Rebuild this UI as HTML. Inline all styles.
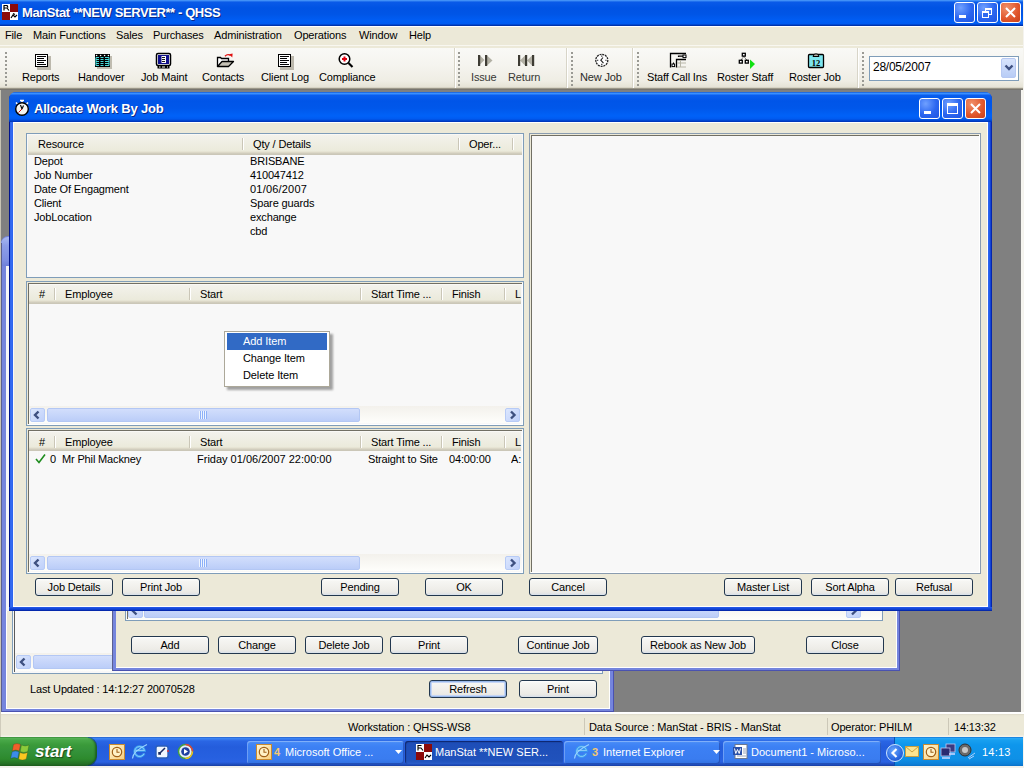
<!DOCTYPE html>
<html><head><meta charset="utf-8">
<style>
*{box-sizing:border-box}
html,body{margin:0;padding:0}
body{width:1024px;height:768px;overflow:hidden;position:relative;background:#808080;font-family:"Liberation Sans",sans-serif;font-size:11px;color:#000}
.a{position:absolute}
.t{position:absolute;white-space:nowrap;font-size:11px;line-height:13px;letter-spacing:-0.15px}
.btn{position:absolute;height:18px;width:78px;border:1px solid #22374E;border-radius:3px;background:linear-gradient(#FFFFFF 0,#F6F6F3 2px,#F1F0EC 50%,#ECEBE6 80%,#E2E4E6 92%,#D6E0EC 100%);text-align:center;line-height:17px;font-size:11px;white-space:nowrap;letter-spacing:-0.15px}
.beige{background:#ECE9D8}
.hdr{position:absolute;height:20px;background:linear-gradient(#FFFFFF 0,#F3F2EC 1px,#EBEADB 16px,#E2DECD 17px,#D6D2C2 18px,#CBC7B8 19px)}
.sep{position:absolute;width:1px;height:12px;background:#CAC6B7;box-shadow:1px 0 0 #FFFFFF}
.sbtn{position:absolute;width:15px;height:14px;border-radius:2px;background:linear-gradient(135deg,#DCE7FE,#BFD0FA);border:1px solid #B7CBF6}
.thumb{position:absolute;height:14px;border-radius:2px;background:linear-gradient(#D2DEFC,#BBCDF8);border:1px solid #B3C7F4}
.track{position:absolute;height:17px;background:linear-gradient(#F3F1EC,#FEFEFB)}
.grip{position:absolute;width:2px;background-image:linear-gradient(#9A9A94 0,#9A9A94 2px,transparent 2px);background-size:2px 4px}
.tbsep{position:absolute;width:2px;top:48px;height:40px;background:linear-gradient(90deg,#D8D5C8 0,#D8D5C8 1px,#FFFFFF 1px)}
</style></head>
<body>

<!-- ===== Main window title bar ===== -->
<div class="a" style="left:0;top:0;width:1023px;height:26px;background:linear-gradient(#4D9BFA 0,#3585F4 1px,#0A5AE8 2px,#0053E4 8px,#0055E6 14px,#005EF5 21px,#005BF0 24px,#0038B8 25px,#0030A0 26px)"></div>
<div class="a" style="left:1023px;top:0;width:1px;height:768px;background:#F4F3EE"></div>
<svg class="a" style="left:2px;top:4px" width="16" height="16" viewBox="0 0 16 16">
 <rect x="0" y="0" width="16" height="16" fill="#fff"/>
 <rect x="8" y="0" width="8" height="8" fill="#8B0A0A"/>
 <rect x="0" y="8" width="8" height="8" fill="#8B0A0A"/>
 <path d="M1.5 1.5h4M2 1.5v5M2 4h3l2 2.5M5 1.5l1 2" stroke="#000" stroke-width="1.2" fill="none"/>
 <path d="M9 14l2-3 2 2 2-2M11 9.5l2 1" stroke="#000" stroke-width="1.2" fill="none"/>
</svg>
<div class="t" style="left:22px;top:5px;font-size:13px;line-height:16px;font-weight:bold;color:#fff;letter-spacing:-0.4px;text-shadow:1px 1px 0 #0A2A8A">ManStat **NEW SERVER** - QHSS</div>
<!-- title buttons -->
<div class="a" style="left:954px;top:2px;width:21px;height:21px;border:1px solid #fff;border-radius:3px;background:radial-gradient(circle at 30% 25%,#6FA0FF,#2B66F0 55%,#1E55E0)">
 <div class="a" style="left:4px;top:12px;width:7px;height:3px;background:#fff"></div></div>
<div class="a" style="left:977px;top:2px;width:21px;height:21px;border:1px solid #fff;border-radius:3px;background:radial-gradient(circle at 30% 25%,#6FA0FF,#2B66F0 55%,#1E55E0)">
 <div class="a" style="left:7px;top:5px;width:7px;height:7px;border:1px solid #fff;border-top-width:2px"></div>
 <div class="a" style="left:4px;top:8px;width:7px;height:7px;border:1px solid #fff;border-top-width:2px;background:#2F6AF0"></div></div>
<div class="a" style="left:1000px;top:2px;width:21px;height:21px;border:1px solid #fff;border-radius:3px;background:radial-gradient(circle at 30% 25%,#F0906A,#E0552A 60%,#C8401C)">
 <svg class="a" style="left:4px;top:4px" width="11" height="11"><path d="M1 1L10 10M10 1L1 10" stroke="#fff" stroke-width="2"/></svg></div>

<!-- ===== Menu bar ===== -->
<div class="a beige" style="left:0;top:26px;width:1023px;height:20px;border-top:1px solid #fff"></div>
<div class="t" style="left:5px;top:29px">File</div>
<div class="t" style="left:33px;top:29px">Main Functions</div>
<div class="t" style="left:116px;top:29px">Sales</div>
<div class="t" style="left:153px;top:29px">Purchases</div>
<div class="t" style="left:214px;top:29px">Administration</div>
<div class="t" style="left:294px;top:29px">Operations</div>
<div class="t" style="left:359px;top:29px">Window</div>
<div class="t" style="left:409px;top:29px">Help</div>

<!-- ===== Toolbar ===== -->
<div class="a" style="left:0;top:45px;width:1023px;height:45px;background:linear-gradient(#F8F7F0 0,#F8F7F0 1px,#ECE9D8 1px,#ECE9D8 3px,#F9F9F6 3px,#F5F4EF 20px,#EFEDE4 36px,#E6E3D6 42px,#C8C4B4 43px,#6E6A5E 44px,#808080 45px)"></div>

<div class="grip" style="left:5px;top:52px;height:35px"></div>
<div class="tbsep" style="left:454px"></div>
<div class="grip" style="left:458px;top:52px;height:35px"></div>
<div class="tbsep" style="left:566px"></div>
<div class="grip" style="left:571px;top:52px;height:35px"></div>
<div class="tbsep" style="left:632px"></div>
<div class="grip" style="left:637px;top:52px;height:35px"></div>
<div class="tbsep" style="left:857px"></div>
<div class="grip" style="left:862px;top:52px;height:35px"></div>

<!-- Reports icon -->
<svg class="a" style="left:34px;top:53px" width="18" height="18" viewBox="0 0 18 18" shape-rendering="crispEdges">
 <rect x="3" y="3" width="14" height="14" fill="#BCB8AC"/>
 <rect x="1" y="1" width="13" height="13" fill="#000"/>
 <rect x="2" y="2" width="11" height="11" fill="#fff"/>
 <rect x="3" y="3" width="9" height="1" fill="#000"/><rect x="3" y="5" width="7" height="1" fill="#000"/><rect x="3" y="7" width="9" height="1" fill="#000"/><rect x="3" y="9" width="7" height="1" fill="#000"/><rect x="3" y="11" width="9" height="1" fill="#000"/>
</svg>
<div class="t" style="left:22px;top:71px">Reports</div>

<!-- Handover icon -->
<svg class="a" style="left:94px;top:53px" width="18" height="18" viewBox="0 0 18 18">
 <rect x="3" y="3" width="15" height="13" fill="#C0BCB0"/>
 <rect x="1" y="1" width="15" height="13" fill="#000"/>
 <g fill="#fff"><circle cx="2.6" cy="2.5" r="0.8"/><circle cx="6.6" cy="2.5" r="0.8"/><circle cx="10.6" cy="2.5" r="0.8"/><circle cx="14.4" cy="2.5" r="0.8"/></g>
 <g stroke="#48D8D8" stroke-width="1.1">
  <path d="M2 4.5h3M2 6.5h3M2 8.5h3M2 10.5h3M2 12.5h3M2 4.5v8"/>
  <path d="M6.5 4.5h3M6.5 6.5h3M6.5 8.5h3M6.5 10.5h3M6.5 12.5h3"/>
  <path d="M11 4.5h4M11 6.5h4M11 8.5h4M11 10.5h4M11 12.5h4M15 4.5v8"/>
 </g>
</svg>
<div class="t" style="left:78px;top:71px">Handover</div>

<!-- Job Maint icon -->
<svg class="a" style="left:155px;top:52px" width="18" height="18" viewBox="0 0 18 18">
 <rect x="1.5" y="1.5" width="14" height="12" rx="1.5" fill="#fff" stroke="#000" stroke-width="1.5"/>
 <rect x="3" y="3" width="11" height="9" fill="#10108C"/>
 <rect x="6.5" y="4" width="4.5" height="7" fill="#fff"/>
 <path d="M7 5.5h3M7 7.5h3M7 9.5h3" stroke="#000" stroke-width="0.9"/>
 <rect x="2.5" y="13.5" width="12" height="3" fill="#000"/>
 <path d="M4 15h1.5M7 15h3M12 15h1" stroke="#fff" stroke-width="1"/>
</svg>
<div class="t" style="left:141px;top:71px">Job Maint</div>

<!-- Contacts icon -->
<svg class="a" style="left:212px;top:48px" width="24" height="22" viewBox="0 0 24 22">
 <path d="M5.5 18.5V9.5H8.5L9.5 10.5H16.5V13.5" fill="#fff" stroke="#000" stroke-width="1.3"/>
 <path d="M5.5 18.5L10 13.5H21.5L16.5 18.5Z" fill="#C6C2B6" stroke="#000" stroke-width="1.3" stroke-linejoin="round"/>
 <path d="M13 8.2Q15.5 5.5 18.5 7.5" fill="none" stroke="#E01010" stroke-width="1.3"/>
 <path d="M17 6.2L20.3 9.5L20.6 5.6Z" fill="#E01010"/>
</svg>
<div class="t" style="left:202px;top:71px">Contacts</div>

<!-- Client Log icon -->
<svg class="a" style="left:277px;top:53px" width="18" height="18" viewBox="0 0 18 18" shape-rendering="crispEdges">
 <rect x="3" y="3" width="14" height="14" fill="#BCB8AC"/>
 <rect x="1" y="1" width="13" height="13" fill="#000"/>
 <rect x="2" y="2" width="11" height="11" fill="#fff"/>
 <rect x="3" y="3" width="9" height="1" fill="#000"/><rect x="3" y="5" width="7" height="1" fill="#000"/><rect x="3" y="7" width="9" height="1" fill="#000"/><rect x="3" y="9" width="7" height="1" fill="#000"/><rect x="3" y="11" width="9" height="1" fill="#000"/>
</svg>
<div class="t" style="left:261px;top:71px">Client Log</div>

<!-- Compliance icon -->
<svg class="a" style="left:337px;top:52px" width="18" height="18" viewBox="0 0 18 18">
 <circle cx="7.5" cy="7" r="5.3" fill="#fff" stroke="#000" stroke-width="1.5"/>
 <path d="M5 7h5M7.5 4.5v5" stroke="#E00010" stroke-width="2"/>
 <path d="M11.5 11l4 4" stroke="#000" stroke-width="2.2"/>
</svg>
<div class="t" style="left:319px;top:71px">Compliance</div>

<!-- Issue icon -->
<svg class="a" style="left:477px;top:54px" width="18" height="14" viewBox="0 0 18 14">
 <path d="M3 1.5l4.5 4.5L3 10.5z" fill="#B2B0A4"/>
 <path d="M10 1.5l5.5 5-5.5 5z" fill="#B2B0A4"/>
 <rect x="1" y="1" width="2.2" height="11" fill="#3E3C34"/>
 <rect x="8" y="1" width="2.2" height="11" fill="#3E3C34"/>
</svg>
<div class="t" style="left:471px;top:71px;color:#383834">Issue</div>

<!-- Return icon -->
<svg class="a" style="left:517px;top:54px" width="18" height="14" viewBox="0 0 18 14">
 <path d="M8 1.5L3 6.5l5 5z" fill="#B2B0A4"/>
 <path d="M15 1.5l-5 5 5 5z" fill="#B2B0A4"/>
 <rect x="1" y="1" width="2.2" height="11" fill="#3E3C34"/>
 <rect x="8" y="1" width="2.2" height="11" fill="#3E3C34"/>
 <rect x="15" y="1" width="2.2" height="11" fill="#3E3C34"/>
</svg>
<div class="t" style="left:508px;top:71px;color:#383834">Return</div>

<!-- New Job icon -->
<svg class="a" style="left:594px;top:53px" width="16" height="16" viewBox="0 0 16 16">
 <circle cx="7.8" cy="7.3" r="6" fill="#fff" stroke="#222" stroke-width="1.3" stroke-dasharray="2 0.8"/>
 <path d="M7.8 2.5v1.3M7.8 10.8v1.3M3 7.3h1.3M11.3 7.3h1.3" stroke="#222" stroke-width="1.1"/>
 <path d="M9 4.5L6.8 7.2l2.7 3" fill="none" stroke="#222" stroke-width="1.1"/>
</svg>
<div class="t" style="left:580px;top:71px;color:#2A2A28">New Job</div>

<!-- Staff Call Ins icon -->
<svg class="a" style="left:669px;top:52px" width="18" height="17" viewBox="0 0 18 17">
 <path d="M1.5 15.5V1.5H17" fill="none" stroke="#000" stroke-width="1.3"/>
 <path d="M9.5 5V4.2h5" fill="none" stroke="#000" stroke-width="1.2"/>
 <rect x="14" y="3" width="3" height="2.6" fill="#fff" stroke="#000" stroke-width="1"/>
 <path d="M7.5 15.5V7.5H17" fill="none" stroke="#000" stroke-width="1.3"/>
 <path d="M8 11h9M8 15h9M11.5 8v7" stroke="#B8B6A8" stroke-width="1"/>
 <path d="M4.5 10.5v1.5" stroke="#000" stroke-width="1"/>
 <rect x="3" y="12" width="2.6" height="2.6" fill="#fff" stroke="#000" stroke-width="1"/>
</svg>
<div class="t" style="left:647px;top:71px">Staff Call Ins</div>

<!-- Roster Staff icon -->
<svg class="a" style="left:738px;top:52px" width="20" height="18" viewBox="0 0 20 18">
 <rect x="4.3" y="1.3" width="3" height="2.8" fill="#fff" stroke="#000" stroke-width="1.3"/>
 <rect x="1.3" y="8.3" width="3" height="2.8" fill="#fff" stroke="#000" stroke-width="1.3"/>
 <rect x="7.3" y="8.3" width="3" height="2.8" fill="#fff" stroke="#000" stroke-width="1.3"/>
 <path d="M5.8 4.5L3 8M5.8 4.5L8.8 8" stroke="#000" stroke-width="0.9" stroke-dasharray="1 0.6"/>
 <path d="M12 7.5l5 4.5-5 5z" fill="#10E010"/>
</svg>
<div class="t" style="left:717px;top:71px">Roster Staff</div>

<!-- Roster Job icon -->
<svg class="a" style="left:807px;top:52px" width="18" height="17" viewBox="0 0 18 17">
 <rect x="1.5" y="2.5" width="15" height="13" rx="1" fill="#7FE6EE" stroke="#000" stroke-width="1.3"/>
 <path d="M6 4.5l1.5-2.5h3l1.5 2.5z" fill="#B4B0A4" stroke="#000" stroke-width="1"/>
 <text x="9" y="13.5" font-family="Liberation Serif" font-size="8.5" font-weight="bold" text-anchor="middle" fill="#000">12</text>
</svg>
<div class="t" style="left:789px;top:71px">Roster Job</div>

<!-- Date combo -->
<div class="a" style="left:869px;top:56px;width:150px;height:25px;border:1px solid #7F9DB9;background:#fff"></div>
<div class="t" style="left:873px;top:60px;font-size:12px;line-height:15px;letter-spacing:-0.25px">28/05/2007</div>
<div class="a" style="left:1001px;top:58px;width:15px;height:20px;border:1px solid #B6C8F2;border-radius:2px;background:linear-gradient(#D8E4FC,#B8CCF6)"></div>
<svg class="a" style="left:1004px;top:64px" width="10" height="8"><path d="M1.5 1.5l3.5 3.5 3.5-3.5" fill="none" stroke="#3E5080" stroke-width="2.4"/></svg>


<!-- ===== MDI children placeholder ===== -->

<!-- MDI client edge -->
<div class="a" style="left:0;top:90px;width:1px;height:622px;background:#C8C4B4"></div>
<div class="a" style="left:1021px;top:90px;width:2px;height:622px;background:#F6F5F0"></div>

<!-- Back window 1 -->
<div class="a" style="left:1px;top:236px;width:613px;height:476px;border-radius:7px 7px 0 0;background:#7585DD;box-shadow:inset -1px -1px 0 #4A52B0"></div>
<div class="a" style="left:1px;top:237px;width:613px;height:29px;border-radius:7px 7px 0 0;background:linear-gradient(#A8B8F0,#8D9EE8 30%,#7E8FE2 80%,#6F80D8)"></div>
<div class="a" style="left:1px;top:243px;width:1px;height:469px;background:#5A5F90"></div>
<div class="a" style="left:6px;top:266px;width:604px;height:443px;background:#FFFFFF"></div>
<div class="a beige" style="left:7px;top:266px;width:602px;height:442px"></div>
<div class="a" style="left:6px;top:266px;width:3px;height:345px;background:#F6F6F6"></div>
<!-- window1 listview -->
<div class="a" style="left:12px;top:560px;width:591px;height:114px;border:1px solid #7F9DB9;background:#F8F8F8"></div>
<div class="a" style="left:14px;top:560px;width:1px;height:112px;background:#5A5A5A"></div>
<div class="track" style="left:15px;top:653px;width:586px;height:18px"></div>
<div class="sbtn" style="left:16px;top:655px"></div>
<svg class="a" style="left:16px;top:655px" width="15" height="14"><path d="M8.5 3.5L5 7l3.5 3.5" fill="none" stroke="#3E5080" stroke-width="2.4"/></svg>
<div class="thumb" style="left:33px;top:655px;width:320px"></div>
<div class="t" style="left:30px;top:683px">Last Updated : 14:12:27 20070528</div>
<div class="btn" style="left:429px;top:680px;width:78px;box-shadow:inset 0 0 0 1px #98B8EA,inset 0 0 0 2px #C6D6F5">Refresh</div>
<div class="btn" style="left:519px;top:680px;width:78px;">Print</div>


<!-- Back window 2 -->
<div class="a" style="left:112px;top:560px;width:788px;height:111px;background:#7585DD;box-shadow:inset -1px -1px 0 #4A52B0"></div>
<div class="a" style="left:112px;top:560px;width:1px;height:111px;background:#5A5F90"></div>
<div class="a beige" style="left:116px;top:560px;width:781px;height:108px"></div>
<div class="a" style="left:896px;top:560px;width:1px;height:108px;background:#FFFFFF"></div>
<div class="a" style="left:116px;top:667px;width:781px;height:1px;background:#FFFFFF"></div>
<div class="a" style="left:125px;top:560px;width:758px;height:61px;border:1px solid #7F9DB9;background:#F8F8F8"></div>
<div class="a" style="left:127px;top:560px;width:1px;height:59px;background:#716F64"></div>
<div class="track" style="left:128px;top:603px;width:753px;height:17px"></div>
<div class="sbtn" style="left:128px;top:604px"></div>
<svg class="a" style="left:128px;top:604px" width="15" height="14"><path d="M8.5 3.5L5 7l3.5 3.5" fill="none" stroke="#3E5080" stroke-width="2.4"/></svg>
<div class="thumb" style="left:144px;top:604px;width:575px"></div>
<div class="sbtn" style="left:846px;top:604px"></div>
<svg class="a" style="left:846px;top:604px" width="15" height="14"><path d="M6 3.5L9.5 7 6 10.5" fill="none" stroke="#3E5080" stroke-width="2.4"/></svg>
<div class="btn" style="left:131px;top:636px;width:78px;">Add</div>
<div class="btn" style="left:218px;top:636px;width:78px;">Change</div>
<div class="btn" style="left:305px;top:636px;width:78px;">Delete Job</div>
<div class="btn" style="left:390px;top:636px;width:78px;">Print</div>
<div class="btn" style="left:518px;top:636px;width:80px;">Continue Job</div>
<div class="btn" style="left:641px;top:636px;width:114px;">Rebook as New Job</div>
<div class="btn" style="left:806px;top:636px;width:78px;">Close</div>


<!-- ===== Dialog ===== -->

<div class="a" style="left:9px;top:92px;width:983px;height:519px;border-radius:7px 7px 0 0;background:linear-gradient(90deg,#00138C 0,#00138C 1px,#2A5EE8 1px,#3A70F2 2px,#2E66EE 3px,#2E66EE 4px)"></div>
<div class="a" style="left:9px;top:92px;width:983px;height:519px;border-radius:7px 7px 0 0;background:linear-gradient(270deg,#001890 0,#0A32C8 1px,#1A55E6 2px,#2A64F0 3px,transparent 4px)"></div>
<div class="a" style="left:9px;top:607px;width:983px;height:4px;background:linear-gradient(#2A5EEA 0,#1A4EE0 1px,#0A3AC8 3px,#001890 4px)"></div>
<div class="a" style="left:9px;top:92px;width:983px;height:30px;border-radius:7px 7px 0 0;background:linear-gradient(#0848C8 0,#3A92FF 1px,#3A8EFF 2px,#0A5EEE 3px,#0055E8 9px,#0057EA 16px,#0062F8 24px,#005AF0 27px,#0040C8 29px,#0030B0 30px)"></div>
<div class="a beige" style="left:13px;top:122px;width:975px;height:485px"></div>
<div class="a" style="left:13px;top:122px;width:975px;height:1px;background:#FFFFFF"></div>
<div class="a" style="left:13px;top:122px;width:1px;height:485px;background:#F8F8F8"></div>
<div class="a" style="left:987px;top:122px;width:1px;height:485px;background:#FFFFFF"></div>
<div class="a" style="left:13px;top:606px;width:975px;height:1px;background:#FFFFFF"></div>

<!-- stopwatch icon -->
<svg class="a" style="left:13px;top:98px" width="18" height="20" viewBox="0 0 18 20">
 <path d="M7 2.5h4M9 2.5v2M3 4.5l1.5 1.5M15 4.5l-1.5 1.5" stroke="#fff" stroke-width="1.6"/>
 <circle cx="9" cy="11" r="6.3" fill="#F4F4F0" stroke="#000" stroke-width="1.4"/>
 <path d="M9 11L5.5 14.5" stroke="#D01010" stroke-width="1"/>
 <path d="M9 11L7.5 7M9 11l1.5-3.5" stroke="#000" stroke-width="1.1"/>
</svg>
<div class="t" style="left:34px;top:101px;font-size:13px;line-height:16px;font-weight:bold;color:#fff;letter-spacing:-0.2px;text-shadow:1px 1px 0 #0A2A8A">Allocate Work By Job</div>
<div class="a" style="left:919px;top:98px;width:21px;height:21px;border:1px solid #fff;border-radius:3px;background:radial-gradient(circle at 30% 25%,#6FA0FF,#2B66F0 55%,#1E55E0)">
 <div class="a" style="left:4px;top:12px;width:7px;height:3px;background:#fff"></div></div>
<div class="a" style="left:942px;top:98px;width:21px;height:21px;border:1px solid #fff;border-radius:3px;background:radial-gradient(circle at 30% 25%,#6FA0FF,#2B66F0 55%,#1E55E0)">
 <div class="a" style="left:4px;top:4px;width:11px;height:11px;border:1px solid #fff;border-top-width:3px"></div></div>
<div class="a" style="left:965px;top:98px;width:21px;height:21px;border:1px solid #fff;border-radius:3px;background:radial-gradient(circle at 30% 25%,#F0906A,#E0552A 60%,#C8401C)">
 <svg class="a" style="left:4px;top:4px" width="11" height="11"><path d="M1 1L10 10M10 1L1 10" stroke="#fff" stroke-width="2"/></svg></div>

<!-- LV1 -->
<div class="a" style="left:26px;top:133px;width:498px;height:145px;border:1px solid #7F9DB9;background:#F8F8F8"></div>
<div class="hdr" style="left:28px;top:134px;width:494px;height:21px;background:linear-gradient(#FFFFFF 0,#F3F2EC 1px,#EBEADB 17px,#E2DECD 18px,#D6D2C2 19px,#CBC7B8 20px)"></div>
<div class="sep" style="left:242px;top:138px"></div>
<div class="sep" style="left:458px;top:138px"></div>
<div class="sep" style="left:512px;top:138px"></div>
<div class="t" style="left:38px;top:138px">Resource</div>
<div class="t" style="left:253px;top:138px">Qty / Details</div>
<div class="t" style="left:469px;top:138px">Oper...</div>
<div class="t" style="left:34px;top:155px">Depot</div>
<div class="t" style="left:250px;top:155px">BRISBANE</div>
<div class="t" style="left:34px;top:169px">Job Number</div>
<div class="t" style="left:250px;top:169px">410047412</div>
<div class="t" style="left:34px;top:183px">Date Of Engagment</div>
<div class="t" style="left:250px;top:183px;letter-spacing:0.2px">01/06/2007</div>
<div class="t" style="left:34px;top:197px">Client</div>
<div class="t" style="left:250px;top:197px">Spare guards</div>
<div class="t" style="left:34px;top:211px">JobLocation</div>
<div class="t" style="left:250px;top:211px">exchange</div>
<div class="t" style="left:250px;top:225px">cbd</div>

<div class="a" style="left:26px;top:281px;width:498px;height:145px;border:1px solid #7F9DB9;background:#F8F8F8"></div>
<div class="a" style="left:27px;top:282px;width:496px;height:143px;border:1px solid #FFFFFF;border-top-color:#ECE9D8;border-left-color:#ECE9D8"></div>
<div class="a" style="left:28px;top:283px;width:494px;height:141px;border-top:1px solid #716F64;border-left:1px solid #716F64"></div>
<div class="hdr" style="left:29px;top:284px;width:492px"></div>
<div class="sep" style="left:54px;top:288px"></div>
<div class="sep" style="left:189px;top:288px"></div>
<div class="sep" style="left:360px;top:288px"></div>
<div class="sep" style="left:441px;top:288px"></div>
<div class="sep" style="left:504px;top:288px"></div>
<div class="t" style="left:39px;top:288px">#</div>
<div class="t" style="left:65px;top:288px">Employee</div>
<div class="t" style="left:200px;top:288px">Start</div>
<div class="t" style="left:371px;top:288px">Start Time ...</div>
<div class="t" style="left:452px;top:288px">Finish</div>
<div class="t" style="left:515px;top:288px">L</div>
<div class="track" style="left:29px;top:406px;width:492px"></div>
<div class="sbtn" style="left:30px;top:408px"></div>
<svg class="a" style="left:30px;top:408px" width="15" height="14"><path d="M8.5 3.5L5 7l3.5 3.5" fill="none" stroke="#3E5080" stroke-width="2.4"/></svg>
<div class="thumb" style="left:47px;top:408px;width:313px"></div>
<svg class="a" style="left:199px;top:411px" width="8" height="8"><path d="M0.5 0v8M2.5 0v8M4.5 0v8M6.5 0v8" stroke="#EEF4FE" stroke-width="1"/><path d="M1.5 0v8M3.5 0v8M5.5 0v8M7.5 0v8" stroke="#8CB0F8" stroke-width="1"/></svg>
<div class="sbtn" style="left:505px;top:408px"></div>
<svg class="a" style="left:505px;top:408px" width="15" height="14"><path d="M6 3.5L9.5 7 6 10.5" fill="none" stroke="#3E5080" stroke-width="2.4"/></svg>

<div class="a" style="left:26px;top:428px;width:498px;height:146px;border:1px solid #7F9DB9;background:#F8F8F8"></div>
<div class="a" style="left:27px;top:429px;width:496px;height:144px;border:1px solid #FFFFFF;border-top-color:#ECE9D8;border-left-color:#ECE9D8"></div>
<div class="a" style="left:28px;top:430px;width:494px;height:142px;border-top:1px solid #716F64;border-left:1px solid #716F64"></div>
<div class="hdr" style="left:29px;top:431px;width:492px"></div>
<div class="sep" style="left:54px;top:436px"></div>
<div class="sep" style="left:189px;top:436px"></div>
<div class="sep" style="left:360px;top:436px"></div>
<div class="sep" style="left:441px;top:436px"></div>
<div class="sep" style="left:504px;top:436px"></div>
<div class="t" style="left:39px;top:436px">#</div>
<div class="t" style="left:65px;top:436px">Employee</div>
<div class="t" style="left:200px;top:436px">Start</div>
<div class="t" style="left:371px;top:436px">Start Time ...</div>
<div class="t" style="left:452px;top:436px">Finish</div>
<div class="t" style="left:515px;top:436px">L</div>
<svg class="a" style="left:35px;top:453px" width="11" height="11"><path d="M1 6l3 3.5L10 1.5" fill="none" stroke="#1E8C1E" stroke-width="1.6"/></svg>
<div class="t" style="left:50px;top:453px">0</div>
<div class="t" style="left:62px;top:453px">Mr Phil Mackney</div>
<div class="t" style="left:197px;top:453px;letter-spacing:0">Friday 01/06/2007 22:00:00</div>
<div class="t" style="left:368px;top:453px">Straight to Site</div>
<div class="t" style="left:449px;top:453px">04:00:00</div>
<div class="t" style="left:511px;top:453px;width:10px;overflow:hidden">A:</div>
<div class="track" style="left:29px;top:554px;width:492px"></div>
<div class="sbtn" style="left:30px;top:556px"></div>
<svg class="a" style="left:30px;top:556px" width="15" height="14"><path d="M8.5 3.5L5 7l3.5 3.5" fill="none" stroke="#3E5080" stroke-width="2.4"/></svg>
<div class="thumb" style="left:47px;top:556px;width:313px"></div>
<svg class="a" style="left:199px;top:559px" width="8" height="8"><path d="M0.5 0v8M2.5 0v8M4.5 0v8M6.5 0v8" stroke="#EEF4FE" stroke-width="1"/><path d="M1.5 0v8M3.5 0v8M5.5 0v8M7.5 0v8" stroke="#8CB0F8" stroke-width="1"/></svg>
<div class="sbtn" style="left:505px;top:556px"></div>
<svg class="a" style="left:505px;top:556px" width="15" height="14"><path d="M6 3.5L9.5 7 6 10.5" fill="none" stroke="#3E5080" stroke-width="2.4"/></svg>

<div class="a" style="left:529px;top:133px;width:452px;height:441px;border:1px solid #8A9CB0;background:#F8F8F8"></div>
<div class="a" style="left:530px;top:134px;width:450px;height:439px;border:1px solid #FFFFFF;border-top-color:#ECE9D8;border-left-color:#ECE9D8"></div>
<div class="a" style="left:531px;top:135px;width:448px;height:437px;border-top:1px solid #716F64;border-left:1px solid #716F64"></div>
<div class="btn" style="left:35px;top:578px;width:78px;">Job Details</div>
<div class="btn" style="left:122px;top:578px;width:78px;">Print Job</div>
<div class="btn" style="left:321px;top:578px;width:78px;">Pending</div>
<div class="btn" style="left:425px;top:578px;width:78px;">OK</div>
<div class="btn" style="left:529px;top:578px;width:78px;">Cancel</div>
<div class="btn" style="left:724px;top:578px;width:78px;">Master List</div>
<div class="btn" style="left:811px;top:578px;width:78px;">Sort Alpha</div>
<div class="btn" style="left:895px;top:578px;width:78px;">Refusal</div>

<div class="a" style="left:227px;top:334px;width:106px;height:56px;background:rgba(0,0,0,0.35);filter:blur(1.2px)"></div>
<div class="a" style="left:224px;top:331px;width:106px;height:56px;border:1px solid #ACA899;background:#FFFFFF"></div>
<div class="a" style="left:227px;top:333px;width:100px;height:17px;background:#316AC5"></div>
<div class="t" style="left:243px;top:335px;color:#fff;letter-spacing:-0.1px">Add Item</div>
<div class="t" style="left:243px;top:352px;letter-spacing:-0.1px">Change Item</div>
<div class="t" style="left:243px;top:369px;letter-spacing:-0.1px">Delete Item</div>


<!-- ===== Status bar ===== -->

<div class="a" style="left:0;top:712px;width:1024px;height:25px;background:linear-gradient(#FFFFFF 0,#FFFFFF 2px,#DAD6C6 2px,#E8E5D4 3px,#ECE9D8 5px,#ECE9D8 23px,#F4F2EA 24px)"></div>
<div class="a" style="left:0;top:712px;width:1px;height:25px;background:#D0CCBC"></div>
<div class="a" style="left:584px;top:718px;width:1px;height:17px;background:#CCC8B8"></div>
<div class="a" style="left:827px;top:718px;width:1px;height:17px;background:#CCC8B8"></div>
<div class="a" style="left:948px;top:718px;width:1px;height:17px;background:#CCC8B8"></div>
<div class="t" style="left:348px;top:721px">Workstation : QHSS-WS8</div>
<div class="t" style="left:589px;top:721px">Data Source : ManStat - BRIS - ManStat</div>
<div class="t" style="left:831px;top:721px">Operator: PHILM</div>
<div class="t" style="left:954px;top:721px">14:13:32</div>


<!-- ===== Taskbar ===== -->

<div class="a" style="left:0;top:737px;width:1023px;height:29px;background:linear-gradient(#1D4DB8 0,#3A8AF6 1px,#3A7EF2 2px,#2A66E4 4px,#245DDC 10px,#2660E0 20px,#2A62E2 25px,#1C48B4 28px,#1A3EA0 29px)"></div>
<div class="a" style="left:0;top:766px;width:1024px;height:2px;background:#F2F1EC"></div>
<!-- start button -->
<div class="a" style="left:0;top:737px;width:97px;height:29px;border-radius:0 12px 12px 0;background:linear-gradient(#2C7A2C 0,#58B458 1px,#48A848 3px,#3A9A3A 8px,#34923A 14px,#2D8A2D 22px,#246E24 27px,#1C5A1C 29px)"></div>
<div class="a" style="left:88px;top:737px;width:9px;height:29px;border-radius:0 12px 12px 0;box-shadow:inset -2px 0 2px rgba(0,40,0,0.45)"></div>
<svg class="a" style="left:10px;top:742px" width="21" height="20" viewBox="0 0 21 20">
 <path d="M3.5 2.5q3.5-2 7 0l-1.3 6.5q-3.5-2-7 0z" fill="#F0602A" stroke="#3A2A10" stroke-width="0.5" stroke-opacity="0.5"/>
 <path d="M11.5 3q3.5 2 7.5 0l-1.3 6.5q-4 2-7.5 0z" fill="#8CCB3A" stroke="#203A10" stroke-width="0.5" stroke-opacity="0.5"/>
 <path d="M2 10q3.5-2 7 0l-1.3 6.5q-3.5-2-7 0z" fill="#3C8CE8" stroke="#102A50" stroke-width="0.5" stroke-opacity="0.5"/>
 <path d="M10 10.5q3.5 2 7.5 0l-1.3 6.5q-4 2-7.5 0z" fill="#FCC820" stroke="#503A10" stroke-width="0.5" stroke-opacity="0.5"/>
</svg>
<div class="t" style="left:35px;top:742px;font-size:17px;line-height:20px;font-weight:bold;font-style:italic;color:#fff;letter-spacing:-0.1px;text-shadow:1px 1px 1px #1A4A1A">start</div>

<!-- quick launch -->
<div class="a" style="left:109px;top:744px;width:16px;height:16px;border:1px solid #C88A30;background:linear-gradient(135deg,#FFF4D0,#F8D080)"></div>
<svg class="a" style="left:109px;top:744px" width="16" height="16"><circle cx="8" cy="8" r="4.7" fill="#FFF2C8" stroke="#A06018" stroke-width="1.2"/><path d="M8 5v3.2h2.6" fill="none" stroke="#A06018" stroke-width="1.1"/></svg>
<svg class="a" style="left:131px;top:743px" width="17" height="17" viewBox="0 0 17 17">
 <path d="M13.2 10.5A5 5 0 1 1 13.5 7.5H4.5" fill="none" stroke="#3AA0F0" stroke-width="2.6"/>
 <path d="M13.2 10.5A5 5 0 1 1 13.5 7.5H4.5" fill="none" stroke="#C8E8FF" stroke-width="0.8" stroke-opacity="0.7"/>
 <path d="M1.5 15.5Q2 8 16 1.5" fill="none" stroke="#9AD4FF" stroke-width="1.2"/>
</svg>
<svg class="a" style="left:154px;top:743px" width="17" height="17" viewBox="0 0 17 17">
 <rect x="2" y="3" width="12" height="12" rx="2" fill="#F0F6FF" stroke="#2A5EB8" stroke-width="1.4"/>
 <path d="M5 11l6-6M7 11h-2v-2" stroke="#1A2A60" stroke-width="1.5" fill="none"/>
 <circle cx="14" cy="8" r="1" fill="#E03030"/>
</svg>
<svg class="a" style="left:177px;top:743px" width="17" height="17" viewBox="0 0 17 17">
 <circle cx="8.5" cy="8.5" r="7" fill="#E8EEF8" stroke="#46A040" stroke-width="1.5"/>
 <path d="M8.5 1.5a7 7 0 0 1 7 7" fill="none" stroke="#E04040" stroke-width="1.5"/>
 <path d="M15.5 8.5a7 7 0 0 1 -7 7" fill="none" stroke="#F0C020" stroke-width="1.5"/>
 <circle cx="8.5" cy="8.5" r="4.3" fill="#2040A0"/>
 <path d="M7 6v5l4-2.5z" fill="#fff"/>
</svg>

<!-- task buttons -->
<div class="a" style="left:247px;top:741px;width:157px;height:23px;border-radius:3px;background:linear-gradient(#5A98F8 0,#4488F6 2px,#3C80F4 6px,#3A7CF0 18px,#3070E0 23px);box-shadow:inset 1px 1px 0 rgba(255,255,255,0.25),inset -1px -1px 0 rgba(0,0,80,0.3)"></div>
<div class="a" style="left:256px;top:744px;width:16px;height:16px;border:1px solid #C88A30;background:linear-gradient(135deg,#FFF4D0,#F8D080)"></div>
<svg class="a" style="left:256px;top:744px" width="16" height="16"><circle cx="8" cy="8" r="4.7" fill="#FFF2C8" stroke="#A06018" stroke-width="1.2"/><path d="M8 5v3.2h2.6" fill="none" stroke="#A06018" stroke-width="1.1"/></svg>
<div class="t" style="left:274px;top:746px;color:#F4C870;font-weight:bold">4</div>
<div class="t" style="left:285px;top:746px;color:#fff;letter-spacing:0">Microsoft Office ...</div>
<svg class="a" style="left:395px;top:750px" width="7" height="5"><path d="M0 0h7l-3.5 4z" fill="#fff"/></svg>

<div class="a" style="left:405px;top:741px;width:158px;height:23px;border-radius:3px;background:linear-gradient(#1A48B0 0,#1E4EB8 3px,#2052BC 20px,#2A5CC8 23px);box-shadow:inset 1px 1px 1px rgba(0,0,40,0.5)"></div>
<svg class="a" style="left:416px;top:744px" width="16" height="16" viewBox="0 0 16 16">
 <rect width="16" height="16" fill="#fff"/><rect x="8" y="0" width="8" height="8" fill="#8B0A0A"/><rect x="0" y="8" width="8" height="8" fill="#8B0A0A"/>
 <path d="M1.5 1.5h4M2 1.5v5M2 4h3l2 2.5" stroke="#000" stroke-width="1.1" fill="none"/><path d="M9 14l2-3 2 2 2-2" stroke="#000" stroke-width="1.1" fill="none"/>
</svg>
<div class="t" style="left:435px;top:746px;color:#fff;letter-spacing:0">ManStat **NEW SER...</div>

<div class="a" style="left:564px;top:741px;width:156px;height:23px;border-radius:3px;background:linear-gradient(#5A98F8 0,#4488F6 2px,#3C80F4 6px,#3A7CF0 18px,#3070E0 23px);box-shadow:inset 1px 1px 0 rgba(255,255,255,0.25),inset -1px -1px 0 rgba(0,0,80,0.3)"></div>
<svg class="a" style="left:573px;top:743px" width="17" height="17" viewBox="0 0 17 17">
 <path d="M13.2 10.5A5 5 0 1 1 13.5 7.5H4.5" fill="none" stroke="#3AA0F0" stroke-width="2.6"/>
 <path d="M13.2 10.5A5 5 0 1 1 13.5 7.5H4.5" fill="none" stroke="#C8E8FF" stroke-width="0.8" stroke-opacity="0.7"/>
 <path d="M1.5 15.5Q2 8 16 1.5" fill="none" stroke="#9AD4FF" stroke-width="1.2"/>
</svg>
<div class="t" style="left:592px;top:746px;color:#F4C870;font-weight:bold">3</div>
<div class="t" style="left:603px;top:746px;color:#fff;letter-spacing:0">Internet Explorer</div>
<svg class="a" style="left:713px;top:750px" width="7" height="5"><path d="M0 0h7l-3.5 4z" fill="#fff"/></svg>

<div class="a" style="left:723px;top:741px;width:158px;height:23px;border-radius:3px;background:linear-gradient(#5A98F8 0,#4488F6 2px,#3C80F4 6px,#3A7CF0 18px,#3070E0 23px);box-shadow:inset 1px 1px 0 rgba(255,255,255,0.25),inset -1px -1px 0 rgba(0,0,80,0.3)"></div>
<svg class="a" style="left:732px;top:743px" width="17" height="17" viewBox="0 0 17 17">
 <rect x="3" y="1.5" width="12" height="14" fill="#fff" stroke="#6A7890" stroke-width="1"/>
 <rect x="1" y="4" width="9" height="8" fill="#2A50A8"/>
 <path d="M2.5 5.5l1.3 5 1.7-4 1.7 4 1.3-5" fill="none" stroke="#fff" stroke-width="1"/>
 <path d="M11 6h3M11 8h3M11 10h3M5 13h9" stroke="#8090A8" stroke-width="0.8"/>
</svg>
<div class="t" style="left:751px;top:746px;color:#fff;letter-spacing:0">Document1 - Microso...</div>

<!-- tray -->
<div class="a" style="left:894px;top:737px;width:129px;height:29px;background:linear-gradient(#0A62C8 0,#2CAAF8 1px,#18A0F0 3px,#0E96EC 8px,#0E90E6 22px,#0C80D8 27px,#0A70C8 29px);box-shadow:inset 1px 0 0 #0950B0"></div>
<div class="a" style="left:886px;top:744px;width:18px;height:18px;border-radius:50%;border:1px solid #D0E8FF;background:radial-gradient(circle at 40% 35%,#68A8FF,#2A68E0 60%,#1A50C0)"></div>
<svg class="a" style="left:886px;top:744px" width="18" height="18"><path d="M10.5 5l-4 4 4 4" fill="none" stroke="#fff" stroke-width="2.2"/></svg>
<svg class="a" style="left:905px;top:745px" width="15" height="13"><rect x="0.5" y="1.5" width="13" height="10" fill="#FCE490" stroke="#C8A040" stroke-width="1"/><path d="M0.5 1.5l6.5 5.5 6.5-5.5" fill="none" stroke="#C8A040" stroke-width="1"/></svg>
<div class="a" style="left:923px;top:744px;width:16px;height:16px;border:1px solid #C88A30;background:linear-gradient(135deg,#FFF4D0,#F8D080)"></div>
<svg class="a" style="left:923px;top:744px" width="16" height="16"><circle cx="8" cy="8" r="4.7" fill="#FFF2C8" stroke="#A06018" stroke-width="1.2"/><path d="M8 5v3.2h2.6" fill="none" stroke="#A06018" stroke-width="1.1"/></svg>
<svg class="a" style="left:940px;top:743px" width="16" height="17" viewBox="0 0 16 17">
 <rect x="6" y="1" width="9" height="8" fill="#3A3A80" stroke="#C0C8F0" stroke-width="0.8"/>
 <rect x="1" y="5" width="9" height="8" fill="#2A2A70" stroke="#C0C8F0" stroke-width="0.8"/>
 <path d="M2 15h8M9 11h6" stroke="#D0D8FF" stroke-width="1.5"/>
</svg>
<svg class="a" style="left:958px;top:743px" width="19" height="18" viewBox="0 0 19 18">
 <circle cx="7" cy="7" r="6" fill="#6A6A6A" stroke="#303030" stroke-width="1"/>
 <circle cx="7" cy="7" r="3" fill="#C8C8C8"/>
 <path d="M10 15l7-5M11 16l5-3" stroke="#C0D8FF" stroke-width="0.9"/>
</svg>
<div class="t" style="left:982px;top:746px;color:#fff;letter-spacing:0.2px">14:13</div>


</body></html>
